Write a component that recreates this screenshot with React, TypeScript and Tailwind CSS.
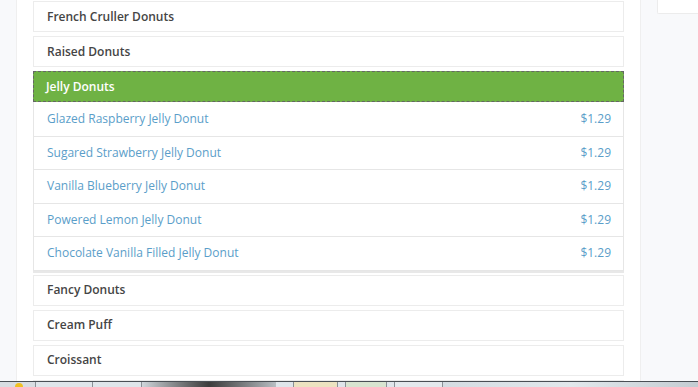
const categoriesTop = ["French Cruller Donuts", "Raised Donuts"];
const categoriesBottom = ["Fancy Donuts", "Cream Puff", "Croissant"];

const jellyItems = [
  { name: "Glazed Raspberry Jelly Donut", price: "$1.29" },
  { name: "Sugared Strawberry Jelly Donut", price: "$1.29" },
  { name: "Vanilla Blueberry Jelly Donut", price: "$1.29" },
  { name: "Powered Lemon Jelly Donut", price: "$1.29" },
  { name: "Chocolate Vanilla Filled Jelly Donut", price: "$1.29" },
];

const Category = ({ title }: { title?: string }) => (
  <div className="flex h-[31px] shrink-0 items-center border border-[#ececec] bg-white px-[13px] text-[12px] font-semibold text-[#454545]">
    {title}
  </div>
);

export default function App() {
  return (
    <div
      className="flex h-[387px] w-[698px] flex-col overflow-hidden bg-[#f8f9fb]"
      style={{ fontFamily: '"Open Sans", "Noto Sans", sans-serif' }}
    >
      <div className="flex min-h-0 flex-1">
        <div className="w-[17px] shrink-0 border-r border-[#efefef] bg-[#f8f9fb]" />
        <main className="flex w-[623px] shrink-0 flex-col gap-[4px] bg-white px-[16px] pt-[1px]">
          {categoriesTop.map((c) => (
            <Category key={c} title={c} />
          ))}
          <div className="shrink-0 bg-white shadow-[0_2px_0_#e8e8e8]">
            <div className="flex h-[31px] items-center border border-dashed border-[#666] bg-[#6fb244] px-[12px] text-[12px] font-semibold text-white">
              Jelly Donuts
            </div>
            <div className="border-x border-b border-[#e6e6e6]">
              {jellyItems.map((item, i) => (
                <div
                  key={item.name}
                  className={`flex h-[33.5px] items-center justify-between pl-[13px] pr-[12px] text-[12px] text-[#5a9ec9] ${i > 0 ? "border-t border-[#e6e6e6]" : ""}`}
                >
                  <span>{item.name}</span>
                  <span>{item.price}</span>
                </div>
              ))}
            </div>
          </div>
          {categoriesBottom.map((c) => (
            <Category key={c} title={c} />
          ))}
          <Category />
        </main>
        <aside className="flex-1 border-l border-[#efefef] bg-[#f8f9fb] pl-[16px]">
          <div className="h-[14px] w-full rounded-bl-[2px] border-b border-l border-[#ececec] bg-white" />
        </aside>
      </div>
      <div className="flex h-[6px] shrink-0 border-t border-[#4a4f55] bg-[#c8d0d6]">
        <div className="w-[36px] border-r border-[#8a9096] bg-[#d8dde2]">
          <div className="ml-[15px] mt-[1px] h-[4px] w-[8px] rounded-t-full bg-[#f0c020]" />
        </div>
        <div className="w-[57px] border-r border-[#8a9096] bg-[#dfe5ea]" />
        <div className="w-[49px] border-r border-[#8a9096] bg-[#dfe5ea]" />
        <div className="w-[134px] bg-gradient-to-r from-[#d0d6db] via-[#3c3c3c] to-[#b8bec3]" />
        <div className="w-[18px] border-r border-[#8a9096] bg-[#dfe5ea]" />
        <div className="w-[44px] border-r border-[#8a9096] bg-[#ece2c0]" />
        <div className="w-[7px] bg-[#dfe5ea]" />
        <div className="w-[42px] border-x border-[#8a9096] bg-[#d8e4d0]" />
        <div className="w-[7px] bg-[#dfe5ea]" />
        <div className="w-[49px] border-x border-[#8a9096] bg-[#e4e9ed]" />
        <div className="flex-1 bg-gradient-to-r from-[#d4dce2] via-[#e2e8ec] to-[#c4ccd2]" />
      </div>
    </div>
  );
}
